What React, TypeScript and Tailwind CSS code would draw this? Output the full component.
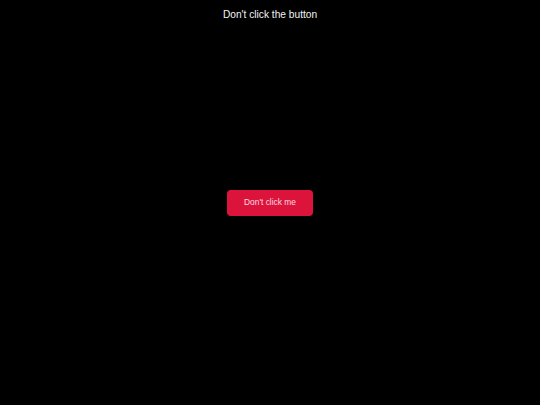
import React from 'react'

export default function App() {
  return (
    <div className="flex h-screen w-full flex-col bg-black font-['Liberation_Sans',Arial,sans-serif]">
      <header className="flex h-[26px] items-start justify-center pt-[9px]">
        <h1 className="text-[10.2px] leading-[12px] text-[#f2f2f2]">Don't click the button</h1>
      </header>
      <main className="flex flex-1 items-center justify-center">
        <button className="h-[26px] w-[86px] rounded-[4px] bg-[#dc143c] text-[8.4px] text-[#fbd9e0]">
          Don't click me
        </button>
      </main>
      <div className="h-[26px]" />
    </div>
  )
}
